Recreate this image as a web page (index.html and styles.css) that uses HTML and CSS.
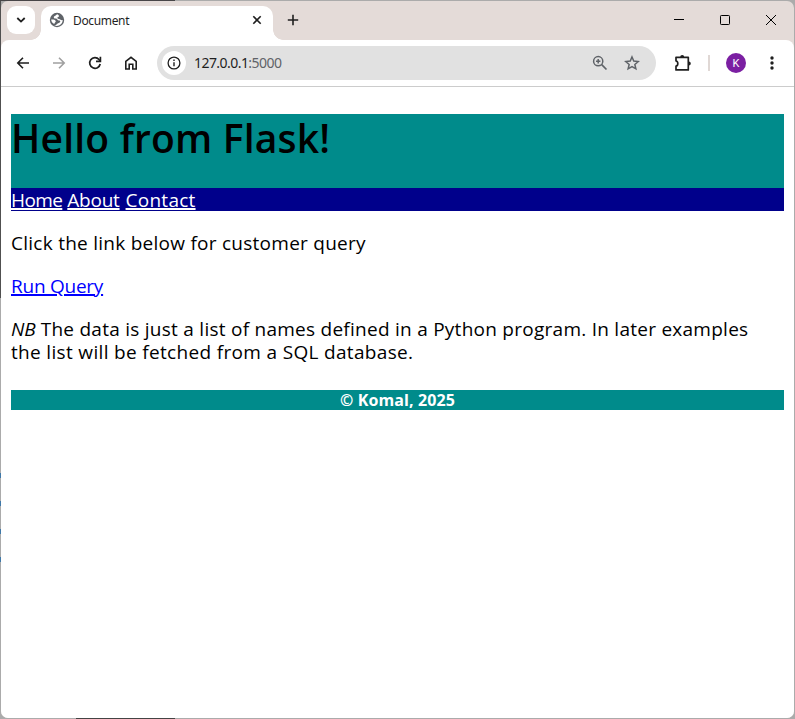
FILE: index.html
```html
<!DOCTYPE html>
<html lang="en">
<head>
<meta charset="utf-8">
<title>Document</title>
<link rel="stylesheet" href="styles.css">
</head>
<body>
<div class="window">
  <header class="tabstrip">
    <button class="tab-search" aria-label="Search tabs"><svg width="10" height="8" viewBox="0 0 10 8"><path d="M1.3 2l3.7 3.6L8.7 2" fill="none" stroke="#1f1f1f" stroke-width="1.8"/></svg></button>
    <div class="tab">
      <svg class="globe" width="16" height="16" viewBox="0 0 16 16"><circle cx="8" cy="8" r="7.2" fill="#5f6368"/><path d="M8.500 2.300C6.500 2.800 6.700 4.200 4.900 4.500 4.600 6 5 6.700 6.900 6.600c1.500 0 1.300 2 2.800 1.900 1.300-.1 1.800.6 1.500 1.500-.3 1.100-2.300.7-3.700 2.400-.6.700-1.700 1-2.300.9 3.600 1.900 8.400-.6 8.500-5.300-1.700.6-2.100-.9-3.900-1.100C7.700 6.600 8.100 5 9.600 4.700c1-.2.300-1.700-1.100-2.400zM2.200 7.600c1.500-.3 3.800 0 4.500 1.500.5 1.300-1.200 1.300-1.400 2.800-1.800-.6-3.100-2.300-3.100-4.300z" fill="#fff"/></svg>
      <span class="tab-title">Document</span>
      <svg class="tab-close" width="10" height="10" viewBox="0 0 10 10"><path d="M1.300 1.300l7.400 7.400M8.700 1.300L1.300 8.700" stroke="#1f1f1f" stroke-width="1.600"/></svg>
    </div>
    <svg class="new-tab" width="12" height="12" viewBox="0 0 12 12"><path d="M6 .8v10.400M.8 6h10.400" stroke="#1f1f1f" stroke-width="1.600"/></svg>
    <div class="controls">
      <svg width="12" height="12" viewBox="0 0 12 12"><path d="M1 5.500h10" stroke="#000"/></svg>
      <svg width="12" height="12" viewBox="0 0 12 12"><rect x="1.500" y="1.500" width="9" height="9" rx=".8" fill="none" stroke="#000"/></svg>
      <svg width="12" height="12" viewBox="0 0 12 12"><path d="M1 1l10 10M11 1L1 11" stroke="#000"/></svg>
    </div>
  </header>
  <div class="toolbar">
    <div class="nav-icons">
      <svg width="16" height="16" viewBox="0 0 16 16"><path d="M14 8H3M8 2.800L2.800 8 8 13.200" fill="none" stroke="#1f1f1f" stroke-width="1.600"/></svg>
      <svg width="16" height="16" viewBox="0 0 16 16"><path d="M2 8h11M8 2.800L13.200 8 8 13.200" fill="none" stroke="#a0a0a0" stroke-width="1.600"/></svg>
      <svg width="16" height="16" viewBox="0 0 16 16"><path d="M13.200 9A5.300 5.300 0 1 1 12 4.500L13.400 6" fill="none" stroke="#1f1f1f" stroke-width="1.700"/><path d="M13.400 1.800v4.500H9" fill="none" stroke="#1f1f1f" stroke-width="1.700"/></svg>
      <svg width="16" height="16" viewBox="0 0 16 16"><path d="M2.800 14V6.300L8 2.300l5.200 4V14H9.800V9.300H6.200V14z" fill="none" stroke="#1f1f1f" stroke-width="1.600"/></svg>
    </div>
    <div class="omnibox">
      <span class="site-info"><svg width="14" height="14" viewBox="0 0 14 14"><circle cx="7" cy="7" r="5.900" fill="none" stroke="#1f1f1f" stroke-width="1.300"/><path d="M7 6.200v4M7 3.500v1.500" stroke="#1f1f1f" stroke-width="1.400"/></svg></span>
      <span class="url">127.0.0.1<span class="port">:5000</span></span>
      <svg class="zoom" width="16" height="16" viewBox="0 0 16 16"><circle cx="6.200" cy="6.200" r="4.600" fill="none" stroke="#5f6368" stroke-width="1.500"/><path d="M9.700 9.700l4.800 4.800" stroke="#5f6368" stroke-width="1.700"/><path d="M6.200 4v4.400M4 6.200h4.400" stroke="#5f6368" stroke-width="1.500"/></svg>
      <svg class="star" width="16" height="16" viewBox="0 0 16 16"><path d="M8 2l1.750 4.100 4.500.4-3.400 2.950 1 4.350L8 11.500l-3.850 2.300 1-4.350L1.750 6.500l4.500-.4z" fill="none" stroke="#5f6368" stroke-width="1.500"/></svg>
    </div>
    <svg class="puzzle" width="18" height="18" viewBox="0 0 18 18"><path d="M2 3.300h12.300v12.600H2v-3.700c2.400-.2 2.400-5 0-5.200z" fill="none" stroke="#1f1f1f" stroke-width="1.700" stroke-linejoin="round"/><path d="M6.200 3a2 2 0 0 1 4 0zM14.800 7.500a2 2 0 0 1 0 4z" fill="#1f1f1f"/></svg>
    <span class="divider"></span>
    <span class="avatar">K</span>
    <svg class="more" width="4" height="14" viewBox="0 0 4 14"><g fill="#1f1f1f"><circle cx="2" cy="2" r="1.700"/><circle cx="2" cy="7" r="1.700"/><circle cx="2" cy="12" r="1.700"/></g></svg>
  </div>
  <main class="page">
    <div class="banner"><h1>Hello from Flask!</h1></div>
    <nav class="menu"><a class="home" href="#">Home</a><a class="about" href="#">About</a><a class="contact" href="#">Contact</a></nav>
    <p><span class="intro">Click the link below for customer query</span></p>
    <p><a class="query" href="#">Run Query</a></p>
    <p><em>NB</em> <span class="note-a">The data is just a list of names defined in a Python program. In later examples</span><br><span class="note-b">the list will be fetched from a SQL database.</span></p>
    <footer>© Komal, 2025</footer>
  </main>
</div>
</body>
</html>
```

FILE: styles.css
```css
* { box-sizing: border-box; }
body {
  margin: 0;
  height: 719px;
  padding: 1px;
  overflow: hidden;
  background:
    linear-gradient(#444, #444) 76px 100% / 99px 1px no-repeat,
    linear-gradient(#484648, #484648) 0 0 / 175px 1px no-repeat,
    linear-gradient(#505050, #505050) 0 0 / 1px 298px no-repeat,
    repeating-linear-gradient(transparent 0 5px, #3f78a8 5px 10px, transparent 10px 28px) 0 468px / 1px 100px no-repeat,
    #ababab;
}
svg { display: block; flex: none; }
.window {
  height: 717px;
  display: flex;
  flex-direction: column;
  background: #e4dbd8;
  border-radius: 7px;
  overflow: hidden;
  font-family: "Noto Sans", sans-serif;
}
.tabstrip { height: 39px; display: flex; flex: none; padding: 5px 0 0 6px; }
.tab-search {
  width: 28px; height: 28px; padding: 0; border: 0; border-radius: 9px;
  background: #fff; display: grid; place-items: center;
}
.tab {
  position: relative;
  width: 232px; height: 34px; margin-left: 6px; padding: 0 11px 6px 8px;
  display: flex; align-items: center;
  background: #fff; border-radius: 10px 10px 0 0;
}
.tab::before, .tab::after {
  content: ""; position: absolute; bottom: 0; width: 10px; height: 10px;
}
.tab::before { left: -10px; background: radial-gradient(circle at 0 0, transparent 9.5px, #fff 10px); }
.tab::after { right: -10px; background: radial-gradient(circle at 100% 0, transparent 9.5px, #fff 10px); }
.tab-title { margin-left: 8px; font-size: 12px; line-height: 18px; letter-spacing: -.35px; color: #1f1f1f; padding-top: 1px; }
.tab-close { margin-left: auto; }
.new-tab { margin: 8px 0 0 14px; }
.controls { margin: 8px 17px 0 auto; display: flex; gap: 34px; }
.toolbar {
  height: 47px; flex: none; display: flex; align-items: center;
  padding: 0 20px 1px 14px;
  background: #fff; border-bottom: 1px solid #ccc; border-radius: 8px 8px 0 0;
}
.nav-icons { display: flex; gap: 20px; }
.omnibox {
  width: 499px; height: 34px; margin-left: 18px; padding: 0 16px 0 5px;
  display: flex; align-items: center; border-radius: 17px; background: #e1e1e1;
}
.site-info { width: 24px; height: 24px; border-radius: 50%; background: #fff; display: grid; place-items: center; }
.url { margin-left: 8px; font-size: 14px; line-height: 20px; letter-spacing: -.55px; color: #1f1f1f; }
.port { color: #5f6368; }
.zoom { margin-left: auto; }
.star { margin-left: 16px; }
.puzzle { margin-left: 18px; }
.divider { width: 2px; height: 16px; margin-left: 16px; background: #e0d8d5; }
.avatar {
  width: 20px; height: 20px; margin-left: 16px; border-radius: 50%;
  background: #7b1fa2; color: #fff; font: 11px/21px Roboto, sans-serif; text-align: center;
}
.more { margin-left: 24px; }
.page {
  flex: 1; padding: 27px 10px 0; background: #fff; color: #000;
  font: 19px/23px "Trebuchet MS", "Open Sans", sans-serif;
}
.page span, .page a { white-space: nowrap; }
.banner { height: 74px; background: #008b8b; }
h1 { margin: 0; font-size: 39px; line-height: 47px; font-weight: 600; letter-spacing: .2px; }
.menu { height: 23px; padding-top: 1px; display: flex; background: #00008b; }
.menu a { color: #fff; line-height: 23px; font-weight: 500; text-underline-offset: 1px; text-decoration-thickness: 2px; text-decoration-skip-ink: none; }
.menu .home { margin-right: 5px; letter-spacing: -.6px; }
.menu .about { margin-right: 6px; letter-spacing: -.25px; }
.menu .contact { letter-spacing: .25px; }
p { margin: 20px 0; }
.menu + p { margin-top: 21px; }
.intro, .note-a { letter-spacing: .26px; }
.note-b { letter-spacing: .33px; }
.query { color: #00f; letter-spacing: -.25px; text-underline-offset: 1px; text-decoration-thickness: 2px; }
footer { height: 20px; margin-top: 26px; background: #008b8b; color: #fff; text-align: center; font-size: 16px; line-height: 21px; font-weight: 700; letter-spacing: .1px; }
```
